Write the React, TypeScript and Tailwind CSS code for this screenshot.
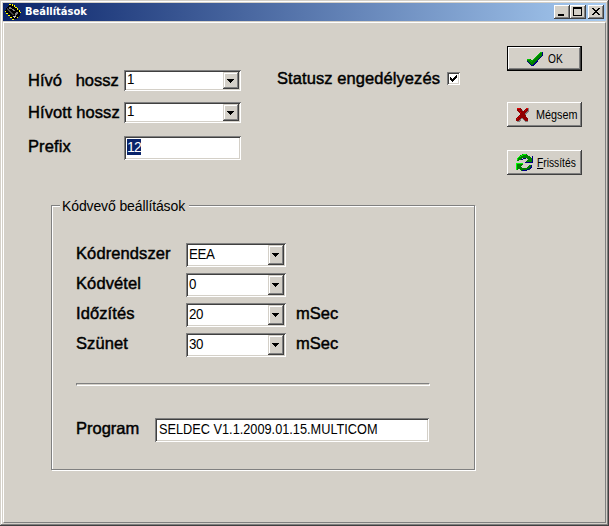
import type { ReactNode } from "react";

const SUNKEN =
  "bg-white shadow-[inset_1px_1px_0_#808080,inset_-1px_-1px_0_#fff,inset_2px_2px_0_#404040,inset_-2px_-2px_0_#d4d0c8]";
const RAISED =
  "bg-[#d4d0c8] shadow-[inset_-1px_-1px_0_#404040,inset_1px_1px_0_#fff,inset_-2px_-2px_0_#808080]";

function Label({ children, className = "" }: { children: ReactNode; className?: string }) {
  return (
    <span
      className={`block shrink-0 whitespace-pre text-[16.5px] leading-5 [-webkit-text-stroke:0.45px_#000] ${className}`}
    >
      {children}
    </span>
  );
}

function Combo({ value, className = "" }: { value: string; className?: string }) {
  return (
    <div className={`flex shrink-0 justify-between p-0.5 ${SUNKEN} ${className}`}>
      <span className="origin-left scale-x-95 pl-px text-[14px] leading-[17px] tracking-[-0.3px]">{value}</span>
      <button
        aria-label="Lista"
        className="flex w-4 items-center bg-[#d4d0c8] pl-1 shadow-[inset_-1px_-1px_0_#404040,inset_1px_1px_0_#d4d0c8,inset_-2px_-2px_0_#808080,inset_2px_2px_0_#fff]"
      >
        <svg width="7" height="4" className="shrink-0" shapeRendering="crispEdges">
          <path d="M0 0h7v1h-7zM1 1h5v1h-5zM2 2h3v1h-3zM3 3h1v1h-1z" />
        </svg>
      </button>
    </div>
  );
}

function TitleButton({ label, d, className = "" }: { label: string; d: string; className?: string }) {
  return (
    <button aria-label={label} className={`h-3.5 w-4 ${RAISED} ${className}`}>
      <svg width="16" height="14" shapeRendering="crispEdges">
        <path d={d} fill="#000" />
      </svg>
    </button>
  );
}

function ChipIcon() {
  return (
    <svg width="17" height="18" viewBox="0 0 17 18" shapeRendering="crispEdges">
      <path d="M5 1L8 2L16 9L15 12L11 16L8 16L0 9L1 5Z" fill="#000" />
      <path d="M2 5h1v1h1v1h1v1h1v1h1v1h1v1h1v1h-2v-1h-1v-1h-1v-1h-1v-1h-1v-1h-1z" fill="#404040" />
      <path d="M4 4h2v1h1v1h-3zM7 6h2v1h1v1h-2v-1h-1zM11 9h2v2h-1v1h-1v1h-1v-3h1z" fill="#808080" />
      <path d="M8 13h3v1h-1v1h-1v-1h-1z" fill="#c0c0c0" />
      <path
        d="M4 1h2v1h-2zM7 1h1v2h-1zM9 2h1v2h-1zM10 4h2v1h-2zM12 5h1v2h-1zM14 7h1v2h-1zM15 9h1v1h-1zM0 8h1v1h-1zM1 10h2v1h-2zM3 12h2v1h-2zM5 14h2v1h-2zM7 16h2v1h-2zM12 14h1v1h-1z"
        fill="#ff0"
      />
    </svg>
  );
}

function CheckIcon() {
  return (
    <svg width="17" height="16" viewBox="0 0 17 16" className="shrink-0" shapeRendering="crispEdges">
      <path d="M1 9L3 8L6 10L14 1H17V4L8 15H5L1 11Z" fill="#000080" />
      <path d="M1 8L4 8L6 10L14 1H16V4L7 14H5L1 10Z" fill="#008000" />
      <path
        d="M1 8h3v1h-3zM4 9h1v1h-1zM5 10h1v1h-1zM6 9h1v1h-1zM7 8h1v1h-1zM8 7h1v1h-1zM9 6h1v1h-1zM10 5h1v1h-1zM11 4h1v1h-1zM12 3h1v1h-1zM13 2h1v1h-1zM14 1h2v1h-2z"
        fill="#00c000"
      />
    </svg>
  );
}

function CrossIcon() {
  return (
    <svg width="14" height="15" viewBox="0 0 14 15" className="shrink-0" shapeRendering="crispEdges">
      <path d="M2 1H5L8 5L10 1H13V4L9 8L12 12V15H9L6 11L4 15H1V12L5 8L2 4Z" fill="#808080" />
      <path d="M1 1H5L7 5L10 1H12V3L9 7L12 12V14H9L6 10L3 14H0V12L4 7L1 3Z" fill="#900000" />
      <path d="M1 1h3v1h-3zM3 3h1v1h-1zM4 5h1v1h-1zM10 1h2v1h-2zM9 3h1v1h-1zM3 9h1v1h-1zM1 11h1v1h-1z" fill="#e00000" />
    </svg>
  );
}

function RefreshIcon() {
  return (
    <svg width="17" height="17" viewBox="0 0 17 17" className="shrink-0" shapeRendering="crispEdges">
      <path d="M1 7V4L4 1L7 0H10L13 2L15 4L17 2V8H9L12 5L10 4H7L4 6Z" fill="#008000" />
      <path d="M0 10H7L5 13L7 14H10L13 11H16V13L13 16L9 17H6L3 15L0 16Z" fill="#008000" />
      <path d="M1 4h1v-1h1v-1h2v-1h2v-1h3v1h-3v1h-2v1h-2v1h-1v2h-1zM0 9h7v1h-6v6h-1z" fill="#0f0" />
      <path d="M9 8h8v1h-8zM16 2h1v7h-1zM5 5h2v-1h3v1h-3v1h-2zM6 16h5v-1h2v-1h1v-1h1v-2h1v3h-1v1h-2v1h-2v1h-5z" fill="#000080" />
    </svg>
  );
}

function ButtonText({ children, className }: { children: ReactNode; className: string }) {
  return <span className={`origin-left text-[13px] whitespace-nowrap ${className}`}>{children}</span>;
}

function Field({ label, value, unit }: { label: string; value: string; unit?: string }) {
  return (
    <div className="flex h-6">
      <Label className="w-[110px] tracking-[0.1px]">{label}</Label>
      <Combo value={value} className="w-[100px] [&>span]:pt-px" />
      {unit && <Label className="ml-2.5">{unit}</Label>}
    </div>
  );
}

export default function App() {
  return (
    <div className="h-[526px] w-[609px] overflow-hidden bg-[#d4d0c8] p-[3px] font-['Liberation_Sans',Arial,sans-serif] text-black shadow-[inset_-1px_-1px_0_#404040,inset_1px_1px_0_#d4d0c8,inset_-2px_-2px_0_#808080,inset_2px_2px_0_#fff]">
      <header className="flex h-[18px] items-center bg-gradient-to-r from-[#0a246a] to-[#a6caf0] [--tw-gradient-position:to_right_in_srgb] pr-0.5">
        <div className="ml-0.5 w-5">
          <ChipIcon />
        </div>
        <h1 className="flex-1 font-['DejaVu_Sans_Condensed','DejaVu_Sans',sans-serif] text-[11px] font-bold text-white">
          Beállítások
        </h1>
        <TitleButton label="Kis méret" d="M4 9h6v2h-6z" />
        <TitleButton label="Teljes méret" d="M3 2h9v9h-9zM4 4v6h7v-6z" />
        <TitleButton
          label="Bezárás"
          className="ml-0.5"
          d="M4 3h2v1h1v1h2v-1h1v-1h2v1h-1v1h-1v1h-1v1h1v1h1v1h1v1h-2v-1h-1v-1h-2v1h-1v1h-2v-1h1v-1h1v-1h1v-1h-1v-1h-1v-1h-1z"
        />
      </header>

      <main className="mt-px flex h-[501px] justify-between border border-t-white border-l-white border-r-[#808080] border-b-[#808080]">
        <div>
          <div className="ml-6 flex pt-[47px]">
            <div>
              <div className="flex h-[21px]">
                <Label className="w-24">{"Hívó   hossz"}</Label>
                <Combo value="1" className="w-[117px] [&>span]:-mt-px" />
              </div>
              <div className="mt-[11px] flex h-[21px]">
                <Label className="w-24 tracking-[0.08px]">Hívott hossz</Label>
                <Combo value="1" className="w-[117px] [&>span]:-mt-px" />
              </div>
              <div className="mt-[13px] flex h-6">
                <Label className="w-24 tracking-[0.1px]">Prefix</Label>
                <div className={`w-[117px] p-[3px] ${SUNKEN}`}>
                  <span className="block h-4 w-3.5 bg-[#0a246a] text-[14px] leading-4 tracking-[-0.9px] text-white">
                    12
                  </span>
                </div>
              </div>
            </div>
            <label className="ml-9 flex h-5 items-start">
              <Label className="-mt-0.5 w-[170px] tracking-[0.08px]">Statusz engedélyezés</Label>
              <span className={`mt-0.5 block size-[13px] ${SUNKEN}`}>
                <svg width="13" height="13" shapeRendering="crispEdges">
                  <path d="M3 5h1v1h1v1h1v-1h1v-1h1v-1h1v-1h1v3h-1v1h-1v1h-1v1h-1v1h-1v-1h-1v-1h-1z" />
                </svg>
              </span>
            </label>
          </div>

          <section className="mt-[45px] ml-[47px] h-[265px] w-[424px] border border-[#808080] pl-6 shadow-[inset_1px_1px_0_#fff,1px_1px_0_#fff]">
            <h2 className="-mt-2 -ml-4 h-4 w-[129px] bg-[#d4d0c8] pl-0.5 text-[14px] leading-4 tracking-[-0.12px] whitespace-nowrap">
              Kódvevő beállítások
            </h2>
            <div className="mt-[29px] flex flex-col gap-1.5">
              <Field label="Kódrendszer" value="EEA" />
              <Field label="Kódvétel" value="0" />
              <Field label="Időzítés" value="20" unit="mSec" />
              <Field label="Szünet" value="30" unit="mSec" />
            </div>
            <div className="mt-[26px] h-[3px] w-[354px] border border-t-[#808080] border-l-[#808080] border-r-white border-b-white" />
            <div className="mt-8 flex h-6">
              <Label className="w-[79px]">Program</Label>
              <div className={`w-[274px] pt-[3px] pl-1 text-[14px] leading-[17px] whitespace-nowrap ${SUNKEN}`}>
                <span className="block origin-left scale-x-[0.91]">SELDEC V1.1.2009.01.15.MULTICOM</span>
              </div>
            </div>
          </section>
        </div>

        <div className="mt-[23px] mr-[23px] flex w-[75px] flex-col">
          <button className="flex h-[25px] items-center border border-black bg-[#d4d0c8] pl-[18px] shadow-[inset_-1px_-1px_0_#404040,inset_1px_1px_0_#fff,inset_-2px_-2px_0_#808080]">
            <CheckIcon />
            <ButtonText className="ml-[5px] scale-x-[0.78]">OK</ButtonText>
          </button>
          <button className={`mt-[31px] flex h-[25px] items-center pl-[9px] ${RAISED}`}>
            <CrossIcon />
            <ButtonText className="ml-1.5 scale-x-[0.83]">Mégsem</ButtonText>
          </button>
          <button className={`mt-[23px] flex h-[25px] items-center pl-[9px] ${RAISED}`}>
            <RefreshIcon />
            <ButtonText className="ml-1 scale-x-[0.79]">
              <u>F</u>rissítés
            </ButtonText>
          </button>
        </div>
      </main>
    </div>
  );
}
